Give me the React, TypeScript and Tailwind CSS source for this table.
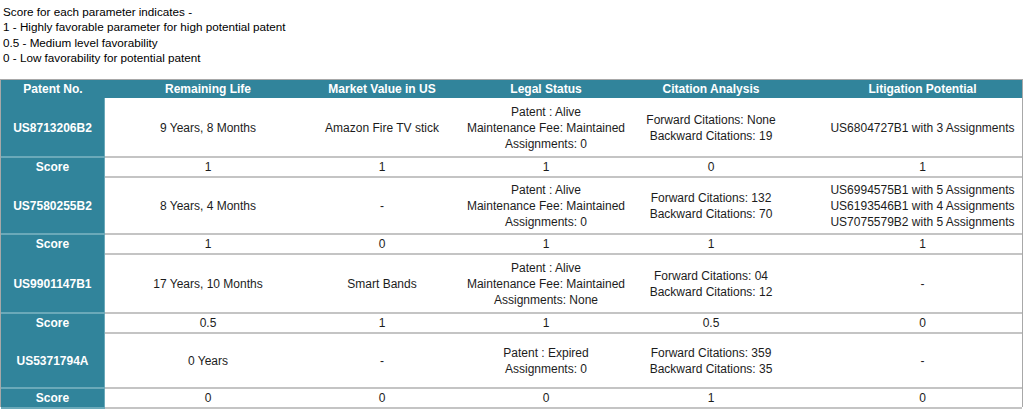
const legend = [
  'Score for each parameter indicates -',
  '1 - Highly favorable parameter for high potential patent',
  '0.5 - Medium level favorability',
  '0 - Low favorability for potential patent',
];

const columns = [
  'Remaining Life',
  'Market Value in US',
  'Legal Status',
  'Citation Analysis',
  'Litigation Potential',
];

const patents = [
  {
    id: 'US8713206B2',
    height: 'h-[60px]',
    cells: [
      ['9 Years, 8 Months'],
      ['Amazon Fire TV stick'],
      ['Patent : Alive', 'Maintenance Fee: Maintained', 'Assignments: 0'],
      ['Forward Citations: None', 'Backward Citations: 19'],
      ['US6804727B1 with 3 Assignments'],
    ],
    scores: ['1', '1', '1', '0', '1'],
  },
  {
    id: 'US7580255B2',
    height: 'h-[59px]',
    cells: [
      ['8 Years, 4 Months'],
      ['-'],
      ['Patent : Alive', 'Maintenance Fee: Maintained', 'Assignments: 0'],
      ['Forward Citations: 132', 'Backward Citations: 70'],
      [
        'US6994575B1 with 5 Assignments',
        'US6193546B1 with 4 Assignments',
        'US7075579B2 with 5 Assignments',
      ],
    ],
    scores: ['1', '0', '1', '1', '1'],
  },
  {
    id: 'US9901147B1',
    height: 'h-[61px]',
    cells: [
      ['17 Years, 10 Months'],
      ['Smart Bands'],
      ['Patent : Alive', 'Maintenance Fee: Maintained', 'Assignments: None'],
      ['Forward Citations: 04', 'Backward Citations: 12'],
      ['-'],
    ],
    scores: ['0.5', '1', '1', '0.5', '0'],
  },
  {
    id: 'US5371794A',
    height: 'h-[57px]',
    cells: [
      ['0 Years'],
      ['-'],
      ['Patent : Expired', 'Assignments: 0'],
      ['Forward Citations: 359', 'Backward Citations: 35'],
      ['-'],
    ],
    scores: ['0', '0', '0', '1', '0'],
  },
];

const grid = 'grid grid-cols-[104px_206px_142px_186px_144px_1fr]';
const lastCol = 'pl-[40px]';

function DataRow({ id, height, cells }: { id: string; height: string; cells: string[][] }) {
  return (
    <div className={`${grid} ${height}`}>
      <div className="flex items-center justify-center pt-[3px] bg-[#31849b] border-b-2 border-r border-[#6ba9b9] font-bold text-white">
        {id}
      </div>
      {cells.map((lines, i) => (
        <div
          key={i}
          className={`flex flex-col items-center justify-center pt-[3px] border-b-2 border-[#c4c4c4] text-center leading-[16px] ${
            i === 4 ? lastCol : ''
          }`}
        >
          {lines.map((l) => (
            <span key={l}>{l}</span>
          ))}
        </div>
      ))}
    </div>
  );
}

function ScoreRow({ scores }: { scores: string[] }) {
  return (
    <div className={`${grid} h-[18px]`}>
      <div className="flex items-center justify-center bg-[#31849b] border-b-2 border-r border-[#6ba9b9] font-bold text-white">
        Score
      </div>
      {scores.map((s, i) => (
        <div
          key={i}
          className={`flex items-center justify-center border-b-2 border-[#c4c4c4] ${i === 4 ? lastCol : ''}`}
        >
          {s}
        </div>
      ))}
    </div>
  );
}

export default function App() {
  return (
    <div className="w-[1024px] h-[419px] bg-white text-[12px] text-[#1c1c1c] font-['Liberation_Sans',Arial,sans-serif] overflow-hidden">
      <div className="pt-[4px] pl-[3px] text-[11.7px] leading-[15.4px] text-black">
        {legend.map((l) => (
          <div key={l}>{l}</div>
        ))}
      </div>

      <div className="mt-[13px] w-[1023px] border-t border-l border-r border-[#a8a8a8]">
        <div className={`${grid} h-[18px] bg-[#31849b] font-bold text-white`}>
          <div className="flex items-center justify-center">Patent No.</div>
          {columns.map((c, i) => (
            <div key={c} className={`flex items-center justify-center ${i === 4 ? lastCol : ''}`}>
              {c}
            </div>
          ))}
        </div>
        {patents.map((p) => (
          <div key={p.id}>
            <DataRow id={p.id} height={p.height} cells={p.cells} />
            <ScoreRow scores={p.scores} />
          </div>
        ))}
      </div>
    </div>
  );
}
